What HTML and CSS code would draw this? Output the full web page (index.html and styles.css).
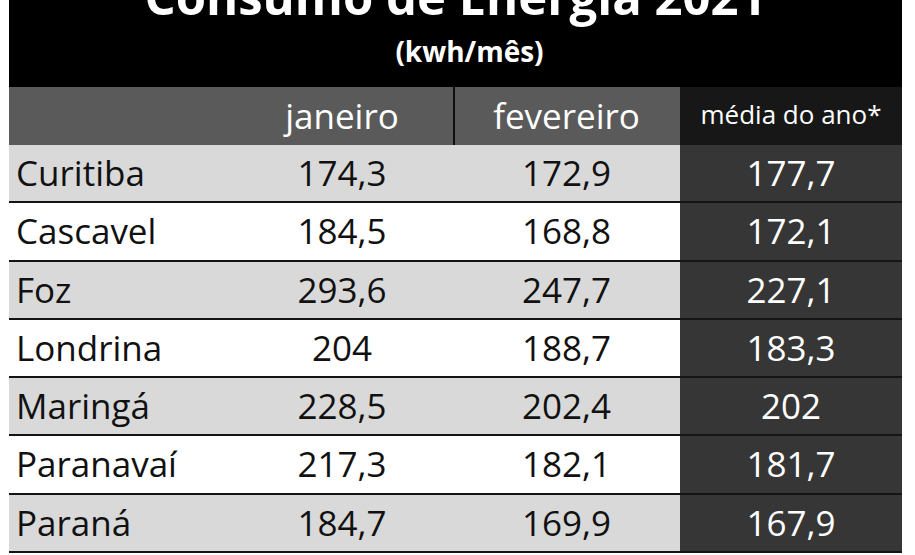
FILE: index.html
```html
<!DOCTYPE html>
<html lang="pt-BR">
<head>
<meta charset="utf-8">
<title>Consumo de Energia 2021</title>
<link rel="stylesheet" href="styles.css">
</head>
<body>
<div class="panel">
  <header class="title-band">
    <h1 class="title">Consumo de Energia 2021</h1>
    <p class="unit">(kwh/mês)</p>
  </header>
  <div class="table">
    <div class="row head">
      <div class="cell city"></div>
      <div class="cell num split">janeiro</div>
      <div class="cell num">fevereiro</div>
      <div class="cell avg small">média do ano*</div>
    </div>
    <div class="row shade">
      <div class="cell city">Curitiba</div>
      <div class="cell num">174,3</div>
      <div class="cell num">172,9</div>
      <div class="cell avg">177,7</div>
    </div>
    <div class="row">
      <div class="cell city">Cascavel</div>
      <div class="cell num">184,5</div>
      <div class="cell num">168,8</div>
      <div class="cell avg">172,1</div>
    </div>
    <div class="row shade">
      <div class="cell city">Foz</div>
      <div class="cell num">293,6</div>
      <div class="cell num">247,7</div>
      <div class="cell avg">227,1</div>
    </div>
    <div class="row">
      <div class="cell city">Londrina</div>
      <div class="cell num">204</div>
      <div class="cell num">188,7</div>
      <div class="cell avg">183,3</div>
    </div>
    <div class="row shade">
      <div class="cell city">Maringá</div>
      <div class="cell num">228,5</div>
      <div class="cell num">202,4</div>
      <div class="cell avg">202</div>
    </div>
    <div class="row">
      <div class="cell city">Paranavaí</div>
      <div class="cell num">217,3</div>
      <div class="cell num">182,1</div>
      <div class="cell avg">181,7</div>
    </div>
    <div class="row shade">
      <div class="cell city">Paraná</div>
      <div class="cell num">184,7</div>
      <div class="cell num">169,9</div>
      <div class="cell avg">167,9</div>
    </div>
  </div>
</div>
</body>
</html>
```
FILE: styles.css
```css
html, body {
  margin: 0;
  padding: 0;
  background: #ffffff;
}

body {
  font-family: "Open Sans", "Noto Sans", "Liberation Sans", sans-serif;
  height: 555px;
  overflow: hidden;
}

.panel {
  margin-left: 9px;
  width: 893px;
}

.title-band {
  background: #000000;
  color: #ffffff;
  height: 87px;
  overflow: hidden;
  text-align: center;
}

.title {
  margin: -28px 0 0 0;
  font-size: 49px;
  line-height: 49px;
  font-weight: 700;
}

.unit {
  margin: 12px 0 0 0;
  padding-left: 28px;
  font-size: 28px;
  line-height: 36px;
  font-weight: 700;
}

.table {
  display: flex;
  flex-direction: column;
}

.row {
  display: grid;
  grid-template-columns: 222px 222px 227px 222px;
  height: 58.3px;
  box-sizing: border-box;
  border-bottom: 2px solid #141414;
  background: #ffffff;
  color: #111111;
}

.row.shade {
  background: #d9d9d9;
}

.row.head {
  height: 58px;
  border-bottom: none;
  background: #5a5a5a;
  color: #ffffff;
}

.cell {
  font-size: 35px;
  line-height: 56px;
  font-weight: 500;
  white-space: nowrap;
}

.row.head .cell {
  line-height: 58px;
  font-weight: 400;
}

.city {
  padding-left: 7px;
}

.num {
  text-align: center;
}

.avg {
  text-align: center;
  background: #363636;
  color: #ffffff;
}

.row.head .avg {
  background: #171717;
}

.row.head .small {
  font-size: 26px;
  line-height: 54px;
}

.split {
  border-right: 2px solid #0d0d0d;
  margin-right: -2px;
  position: relative;
  z-index: 1;
}
```
